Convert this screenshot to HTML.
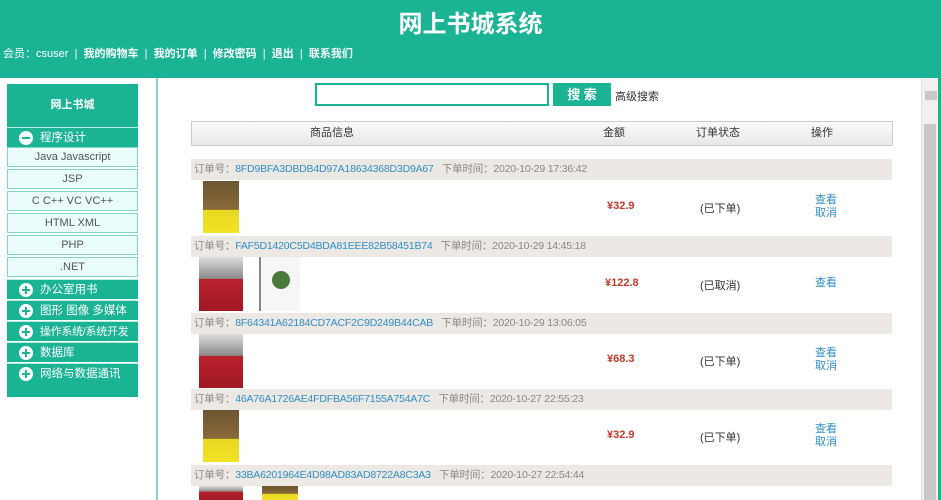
<!DOCTYPE html>
<html style="overflow:hidden;height:500px"><head><meta charset="utf-8"><style>
*{margin:0;padding:0;box-sizing:border-box}
body{width:941px;height:500px;overflow:hidden;background:#fff;font-family:"Liberation Sans","Noto Sans CJK SC",sans-serif;position:relative;font-size:12px}
.a{position:absolute}
#hd{left:0;top:0;width:941px;height:78px;background:#1ab394}
#title{left:0;width:941px;top:4px;text-align:center;color:#fff;font-size:24px;font-weight:bold}
#nav{left:3px;top:45px;color:#fff;font-size:11px;white-space:nowrap}
#nav b{font-weight:bold}
.sb{left:7px;width:131px;background:#1ab394;color:#fff}
.sub{left:7px;width:131px;height:20px;background:#eafdfa;border:1px solid #7fd8c7;color:#555;text-align:center;font-size:11px;line-height:18px}
.cat{left:7px;width:131px;height:20px;background:#1ab394;color:#fff;font-size:11.5px;line-height:20px;padding-left:33px;border-top:1px solid #b8ebe1;white-space:nowrap;overflow:hidden}
.ic{position:absolute;left:12px;top:3px;width:14px;height:14px;border-radius:50%;background:#fff}
.ic:before{content:"";position:absolute;left:3px;top:6px;width:8px;height:2px;background:#1ab394}
.ic.p:after{content:"";position:absolute;left:6px;top:3px;width:2px;height:8px;background:#1ab394}
.bar{left:191px;width:701px;height:21px;background:#ece8e4;color:#888;font-size:10.5px;line-height:21px;padding-left:3px;white-space:nowrap;letter-spacing:-0.2px}
.bar span{color:#2f8fc8}
.pr{color:#c0392b;font-size:11px;font-weight:bold}
.st{color:#333;font-size:11px}
.lk{color:#2f8fc8;font-size:11px;line-height:13px}
.bA{width:36px;height:52px;background:linear-gradient(#6b5530 0,#8a6a3a 55%,#e8d820 56%,#f2e326 100%)}
.bB{width:44px;height:54px;background:linear-gradient(#ddd 0,#8a8a8a 40%,#b8222d 41%,#a01825 100%)}
.bC{width:41px;height:54px;background:#f6f6f6;border-left:2px solid #888}
.bC:after{content:"";position:absolute;left:11px;top:14px;width:18px;height:18px;border-radius:50%;background:#4a7a3a}
</style></head><body>
<div class="a" id="hd"></div>
<div class="a" id="title">网上书城系统</div>
<div class="a" id="nav">会员：csuser &nbsp;| &nbsp;<b>我的购物车</b> &nbsp;| &nbsp;<b>我的订单</b> &nbsp;| &nbsp;<b>修改密码</b> &nbsp;| &nbsp;<b>退出</b> &nbsp;| &nbsp;<b>联系我们</b></div>

<div class="a" style="left:0;top:78px;width:158px;height:422px;border-right:2px solid #7fd8c7"></div>
<div class="a sb" style="top:84px;height:43px;line-height:43px;text-align:center;font-weight:bold;font-size:11px">网上书城</div>
<div class="a cat" style="top:127px"><i class="ic"></i>程序设计</div>
<div class="a sub" style="top:147px">Java Javascript</div>
<div class="a sub" style="top:169px">JSP</div>
<div class="a sub" style="top:191px">C C++ VC VC++</div>
<div class="a sub" style="top:213px">HTML XML</div>
<div class="a sub" style="top:235px">PHP</div>
<div class="a sub" style="top:257px">.NET</div>
<div class="a cat" style="top:279px"><i class="ic p"></i>办公室用书</div>
<div class="a cat" style="top:300px"><i class="ic p"></i>图形 图像 多媒体</div>
<div class="a cat" style="top:321px;font-size:11px;letter-spacing:-0.3px"><i class="ic p"></i>操作系统/系统开发</div>
<div class="a cat" style="top:342px"><i class="ic p"></i>数据库</div>
<div class="a cat" style="top:363px;height:34px"><i class="ic p"></i>网络与数据通讯</div>

<div class="a" style="left:315px;top:83px;width:234px;height:23px;border:2px solid #1ab394"></div>
<div class="a" style="left:553px;top:83px;width:58px;height:23px;background:#1ab394;color:#fff;text-align:center;line-height:23px;font-size:13px;font-weight:bold">搜 索</div>
<div class="a" style="left:615px;top:88px;font-size:11px;color:#333">高级搜索</div>

<div class="a" style="left:191px;top:121px;width:702px;height:25px;border:1px solid #ccc;background:linear-gradient(#fafafa,#e8e8e8);color:#333;font-size:11px;line-height:23px">
<span class="a" style="left:118px">商品信息</span><span class="a" style="left:411px">金额</span><span class="a" style="left:504px">订单状态</span><span class="a" style="left:619px">操作</span></div>

<div class="a bar" style="top:159px">订单号：<span>8FD9BFA3DBDB4D97A18634368D3D9A67</span> &nbsp; 下单时间：2020-10-29 17:36:42</div>
<div class="a bA" style="left:203px;top:181px"></div>
<div class="a pr" style="left:607px;top:200px">¥32.9</div>
<div class="a st" style="left:700px;top:200px">(已下单)</div>
<div class="a lk" style="left:815px;top:194px">查看<br>取消</div>

<div class="a bar" style="top:236px">订单号：<span>FAF5D1420C5D4BDA81EEE82B58451B74</span> &nbsp; 下单时间：2020-10-29 14:45:18</div>
<div class="a bB" style="left:199px;top:257px"></div>
<div class="a bC" style="left:259px;top:257px"></div>
<div class="a pr" style="left:605px;top:277px">¥122.8</div>
<div class="a st" style="left:700px;top:277px">(已取消)</div>
<div class="a lk" style="left:815px;top:277px">查看</div>

<div class="a bar" style="top:313px">订单号：<span>8F64341A62184CD7ACF2C9D249B44CAB</span> &nbsp; 下单时间：2020-10-29 13:06:05</div>
<div class="a bB" style="left:199px;top:334px"></div>
<div class="a pr" style="left:607px;top:353px">¥68.3</div>
<div class="a st" style="left:700px;top:353px">(已下单)</div>
<div class="a lk" style="left:815px;top:347px">查看<br>取消</div>

<div class="a bar" style="top:389px">订单号：<span>46A76A1726AE4FDFBA56F7155A754A7C</span> &nbsp; 下单时间：2020-10-27 22:55:23</div>
<div class="a bA" style="left:203px;top:410px"></div>
<div class="a pr" style="left:607px;top:429px">¥32.9</div>
<div class="a st" style="left:700px;top:429px">(已下单)</div>
<div class="a lk" style="left:815px;top:423px">查看<br>取消</div>

<div class="a bar" style="top:465px">订单号：<span>33BA6201964E4D98AD83AD8722A8C3A3</span> &nbsp; 下单时间：2020-10-27 22:54:44</div>
<div class="a bB" style="left:199px;top:486px;height:14px"></div>
<div class="a bA" style="left:262px;top:486px;height:14px"></div>

<div class="a" style="left:921px;top:78px;width:20px;height:422px;background:#f0f0f0;border-left:1px solid #e0e0e0"></div>
<div class="a" style="left:925px;top:91px;width:12px;height:9px;background:#c8c8c8"></div>
<div class="a" style="left:924px;top:124px;width:12px;height:376px;background:#c8c8c8"></div>
<div class="a" style="left:938px;top:78px;width:3px;height:422px;background:#1ab394"></div>
</body></html>
